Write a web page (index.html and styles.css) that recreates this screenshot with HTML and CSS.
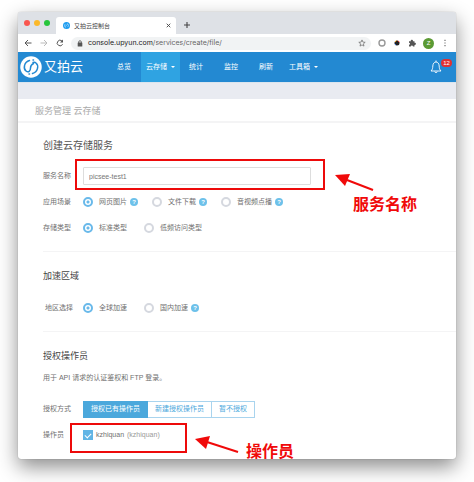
FILE: index.html
```html
<!DOCTYPE html>
<html lang="zh-CN">
<head>
<meta charset="utf-8">
<meta name="viewport" content="width=device-width, initial-scale=1">
<title>又拍云控制台</title>
<link rel="stylesheet" href="styles.css">
</head>
<body>
<div class="window">
  <div class="tabbar">
    <span class="lights"><i class="light red"></i><i class="light yellow"></i><i class="light green"></i></span>
    <div class="tab">
      <svg class="favicon" viewBox="0 0 22 22"><circle cx="11" cy="11" r="11" fill="#1c9cf0"/><path d="M9 17c-5-2-6-8-1-11M13 5c5 2 6 8 1 11M7 14l7-7" fill="none" stroke="#fff" stroke-width="1.500"/></svg>
      <span class="tab-title">又拍云控制台</span>
      <button class="plain" aria-label="关闭"><svg width="5" height="5" viewBox="0 0 5 5"><path d="M.7.7l3.6 3.6M4.3.7L.7 4.3" stroke="#444" stroke-width=".9"/></svg></button>
    </div>
    <button class="plain new-tab" aria-label="新标签页"><svg width="6" height="6" viewBox="0 0 6 6"><path d="M3 0v6M0 3h6" stroke="#444" stroke-width="1.1"/></svg></button>
  </div>
  <div class="toolbar">
    <button class="plain" aria-label="后退"><svg width="8" height="8" viewBox="0 0 8 8"><path d="M7.5 4H1M4 1L1 4l3 3" fill="none" stroke="#555" stroke-width="1"/></svg></button>
    <button class="plain" aria-label="前进"><svg width="8" height="8" viewBox="0 0 8 8"><path d="M.5 4H7M4 1l3 3-3 3" fill="none" stroke="#bbb" stroke-width="1"/></svg></button>
    <button class="plain" aria-label="刷新"><svg width="8" height="8" viewBox="0 0 8 8"><path d="M6.6 5.2A2.8 2.8 0 1 1 6 2" fill="none" stroke="#555" stroke-width="1"/><path d="M7 .6v3H4z" fill="#555"/></svg></button>
    <div class="address">
      <svg class="lock" width="6" height="7" viewBox="0 0 6 7"><rect x=".7" y="2.6" width="4.6" height="3.8" rx=".5" fill="#555"/><path d="M1.7 3V2a1.3 1.3 0 0 1 2.6 0v1" fill="none" stroke="#555" stroke-width=".8"/></svg>
      <span class="url"><b>console.upyun.com</b>/services/create/file/</span>
      <svg width="8" height="8" viewBox="0 0 8 8"><path d="M4 .9l.9 2.2 2.3.2-1.8 1.5.6 2.3L4 5.9 2 7.1l.6-2.3L.8 3.3l2.3-.2z" fill="none" stroke="#666" stroke-width=".7"/></svg>
    </div>
    <div class="extensions">
      <svg width="8" height="8" viewBox="0 0 8 8"><circle cx="4" cy="4" r="3" fill="none" stroke="#999" stroke-width="1.4"/></svg>
      <svg width="8" height="8" viewBox="0 0 8 8"><circle cx="4" cy="4" r="2.5" fill="#222"/><path d="M2 3l1.500-1.400" stroke="#f5a623"/><path d="M5 1.800l1.200 1.400" stroke="#e33"/><path d="M1.800 4.800l1.300 1.300" stroke="#36c"/></svg>
      <svg width="8" height="8" viewBox="0 0 8 8"><path d="M1 2.2h1.800a1.100 1.100 0 1 1 2.100 0h1.600v1.600a1.100 1.100 0 1 1 0 2.100v1.600H5a1.100 1.100 0 0 0-2.200 0H1V5.700a1 1 0 0 0 0-2z" fill="#555"/></svg>
      <span class="avatar">Z</span>
      <svg width="8" height="8" viewBox="0 0 8 8"><path d="M3.500.8h1v1.200h-1zM3.500 3.400h1v1.200h-1zM3.500 6h1v1.200h-1z" fill="#555"/></svg>
    </div>
  </div>

  <header class="nav">
    <a class="brand" href="#">
      <svg width="22" height="22" viewBox="0 0 44 44"><circle cx="22" cy="22" r="21.500" fill="#fff"/><g fill="none" stroke="#2389d2" stroke-width="3" stroke-linecap="round"><path d="M19 9C8 12 6 25 12 30c5 4 9 0 9-6 0-4 2-7 6-9"/><path d="M25 35c11-3 13-16 7-21-2-2-4-2-6-1M19 36l-1 0M26 8l1 0"/></g></svg>
      <span>又拍云</span>
    </a>
    <nav class="menu">
      <a href="#">总览</a>
      <a class="active" href="#">云存储<i class="caret"></i></a>
      <a href="#">统计</a>
      <a href="#">监控</a>
      <a href="#">刷新</a>
      <a href="#">工具箱<i class="caret"></i></a>
    </nav>
    <button class="plain bell" aria-label="通知">
      <svg width="12" height="14" viewBox="0 0 12 14"><path d="M6 .5v1.500M1 11c1.600-1.500 1.700-3 1.800-5C3 3.500 4.200 2 6 2s3 1.500 3.200 4c.1 2 .2 3.500 1.800 5zM4.800 11.500c.2 1.600 2.200 1.600 2.400 0" fill="none" stroke="#fff" stroke-width=".9"/></svg>
      <span class="badge">12</span>
    </button>
  </header>
  <div class="band"></div>
  <div class="crumb">服务管理 云存储</div>

  <main class="content">
    <section>
      <h1>创建云存储服务</h1>
      <div class="row">
        <label class="name" for="service">服务名称</label>
        <input class="text" id="service" type="text" value="picsee-test1">
        <span class="mark mark-name"></span>
        <div class="note note-name">
          <svg width="40" height="18" viewBox="0 0 40 18"><path d="M12 6l26 10" stroke="#f00a0a" stroke-width="2"/><path d="M0 1l15-1-5 12z" fill="#f00a0a"/></svg>
          <span>服务名称</span>
        </div>
      </div>
      <div class="row" role="radiogroup" aria-label="应用场景">
        <span class="name">应用场景</span>
        <label class="option"><input type="radio" name="scene" checked>网页图片<i class="help">?</i></label>
        <label class="option"><input type="radio" name="scene">文件下载<i class="help">?</i></label>
        <label class="option"><input type="radio" name="scene">音视频点播<i class="help">?</i></label>
      </div>
      <div class="row wide" role="radiogroup" aria-label="存储类型">
        <span class="name">存储类型</span>
        <label class="option"><input type="radio" name="kind" checked>标准类型</label>
        <label class="option"><input type="radio" name="kind">低频访问类型</label>
      </div>
    </section>
    <section>
      <h2>加速区域</h2>
      <div class="row wide" role="radiogroup" aria-label="地区选择">
        <span class="name indent">地区选择</span>
        <label class="option"><input type="radio" name="area" checked>全球加速</label>
        <label class="option"><input type="radio" name="area">国内加速<i class="help">?</i></label>
      </div>
    </section>
    <section>
      <h2>授权操作员</h2>
      <p>用于 API 请求的认证鉴权和 FTP 登录。</p>
      <div class="row">
        <span class="name">授权方式</span>
        <div class="segments">
          <button class="on">授权已有操作员</button><button>新建授权操作员</button><button>暂不授权</button>
        </div>
      </div>
      <div class="row">
        <span class="name">操作员</span>
        <label class="check"><input type="checkbox" checked>kzhiquan <small>(kzhiquan)</small></label>
        <span class="mark mark-operator"></span>
        <div class="note note-operator">
          <svg width="45" height="18" viewBox="0 0 45 18"><path d="M12 5l31 10" stroke="#f00a0a" stroke-width="2"/><path d="M0 2l15-3-4 13z" fill="#f00a0a"/></svg>
          <span>操作员</span>
        </div>
      </div>
    </section>
  </main>
</div>
</body>
</html>
```

FILE: styles.css
```css
* { box-sizing: border-box; }

body {
  margin: 0;
  padding: 12px 18px 23px;
  background: #fff;
  color: #707070;
  font: 7px/10px "Liberation Sans", "Noto Sans CJK SC", sans-serif;
  overflow: hidden;
}

svg { display: block; flex: none; overflow: visible; }
i { font-style: normal; }
a { color: inherit; text-decoration: none; }

.plain {
  display: block;
  padding: 0;
  border: 0;
  background: none;
}

.window {
  border-radius: 3px;
  background: #fff;
  box-shadow: 0 0 1px rgba(0, 0, 0, .4), 0 8px 20px rgba(0, 0, 0, .45);
}

/* Browser frame */
.tabbar {
  display: flex;
  align-items: flex-end;
  height: 22px;
  padding-left: 6px;
  border-radius: 3px 3px 0 0;
  background: #dee1e6;
}
.lights { display: flex; gap: 4px; padding-bottom: 8px; }
.light { width: 6px; height: 6px; border-radius: 50%; }
.red { background: #f9564f; }
.yellow { background: #fbb829; }
.green { background: #27c53c; }
.tab {
  display: flex;
  align-items: center;
  width: 120px;
  height: 17px;
  margin-left: 6px;
  padding: 0 5px 0 7px;
  border-radius: 3px 3px 0 0;
  background: #fff;
}
.favicon { width: 7px; height: 7px; }
.tab-title { flex: 1; margin-left: 4px; color: #444; font-size: 6px; }
.new-tab { margin: 0 0 6px 8px; }

.toolbar {
  display: flex;
  align-items: center;
  gap: 8px;
  height: 18px;
  padding: 0 7px 0 6px;
}
.address {
  display: flex;
  flex: 1;
  align-items: center;
  height: 13px;
  margin: 0 -1px;
  padding: 0 5px 0 6px;
  border-radius: 7px;
  background: #f1f3f4;
}
.url { flex: 1; margin-left: 5px; color: #666; font-family: Inter, sans-serif; }
.url b { color: #222; font-weight: 400; }
.extensions { display: flex; align-items: center; gap: 7px; }
.avatar {
  width: 11px;
  height: 11px;
  border-radius: 50%;
  background: #5b9a34;
  color: #fff;
  font-size: 6px;
  line-height: 11px;
  text-align: center;
}

/* Site header */
.nav {
  display: flex;
  height: 30px;
  padding: 0 14px 0 2px;
  background: #2389d2;
  color: #fff;
}
.brand {
  display: flex;
  align-items: center;
  gap: 2px;
  width: 89px;
  font-size: 13px;
}
.menu { display: flex; flex: 1; }
.menu a {
  display: flex;
  align-items: center;
  margin-right: 11px;
  padding: 0 5px;
}
.menu a:first-child { padding-left: 8px; margin-right: 5px; }
.menu a.active { margin-right: 4px; background: #2fa3e2; }
.menu a:nth-child(5) { margin-right: 6px; }
.caret {
  margin-left: 4px;
  border: 2px solid transparent;
  border-top-color: #fff;
  border-bottom: 0;
}
.bell { position: relative; align-self: center; }
.badge {
  position: absolute;
  top: -1px;
  left: 11px;
  width: 11px;
  height: 8px;
  border-radius: 4px;
  background: #e03131;
  color: #fff;
  font-size: 6px;
  line-height: 8px;
}

.band { height: 17px; border-top: 1px solid #dbe5ee; background: #e9ebf1; }
.crumb {
  height: 24px;
  padding-left: 17px;
  border-bottom: 2px solid #f4f4f5;
  color: #aaa;
  font-size: 9px;
  line-height: 24px;
}

/* Form */
.content { padding: 16px 0 15px 25px; }
section + section { margin-top: 14px; padding-top: 17px; border-top: 1px solid #f4f4f5; }
h1, h2 { margin: 0; color: #555; font-weight: 400; }
h1 { font-size: 10px; line-height: 14px; margin-bottom: 14px; }
h2 { font-size: 9px; line-height: 14px; color: #444; }
p { margin: 10px 0 17px; }

.row {
  display: flex;
  align-items: center;
  gap: 14px;
  height: 18px;
  position: relative;
}
.row + .row { margin-top: 8px; }
.wide { gap: 17px; }
section h2 + .row { margin-top: 16px; }
.name { width: 40px; margin-right: -14px; }
.wide .name { margin-right: -17px; }
.indent { padding-left: 2px; }

.text {
  width: 228px;
  height: 18px;
  padding: 0 5px;
  border: 1px solid #ddd;
  border-radius: 1px;
  color: #777;
  font: inherit;
}

.option { display: flex; align-items: center; }
.option input {
  appearance: none;
  width: 10px;
  height: 10px;
  margin: 0 6px 0 0;
  border: 2px solid #d5d8df;
  border-radius: 50%;
}
.option input:checked {
  border-color: #69b9ea;
  background: radial-gradient(circle, #69b9ea 1px, #fff 2px);
}
.help {
  width: 8px;
  height: 8px;
  margin-left: 3px;
  border-radius: 50%;
  background: #6dc1ea;
  color: #fff;
  font-size: 6px;
  font-weight: 700;
  line-height: 8px;
  text-align: center;
}

.segments { display: flex; }
.segments button {
  height: 17px;
  padding: 0 7px;
  border: 1px solid #a9d4ee;
  background: #fff;
  color: #4ba8dc;
  font: inherit;
}
.segments button + button { border-left-width: 0; }
.segments .on { border-color: #4ba8dc; background: #4ba8dc; color: #fff; }

.check { display: flex; align-items: center; gap: 3px; }
.check small { font-size: 7px; color: #999; }
.check input {
  appearance: none;
  display: grid;
  place-items: center;
  width: 10px;
  height: 10px;
  margin: 0;
  background: #62b5e5;
}
.check input::after {
  content: "";
  width: 5px;
  height: 3px;
  border: solid #fff;
  border-width: 0 0 1px 1px;
  transform: rotate(-45deg);
}

/* Annotations drawn over the page */
.mark { position: absolute; border: 2px solid #ed0a0a; pointer-events: none; }
.mark-name { top: -8px; left: 32px; width: 250px; height: 31px; }
.mark-operator { top: -3px; left: 27px; width: 117px; height: 30px; }
.note { position: absolute; color: #f00a0a; font-size: 16px; font-weight: 700; line-height: 20px; white-space: nowrap; }
.note-name { top: 7px; left: 292px; }
.note-name span { display: block; margin: 3px 0 0 18px; }
.note-operator { top: 11px; left: 152px; display: flex; gap: 6px; }
.note-operator span { margin-top: 5px; }
```
